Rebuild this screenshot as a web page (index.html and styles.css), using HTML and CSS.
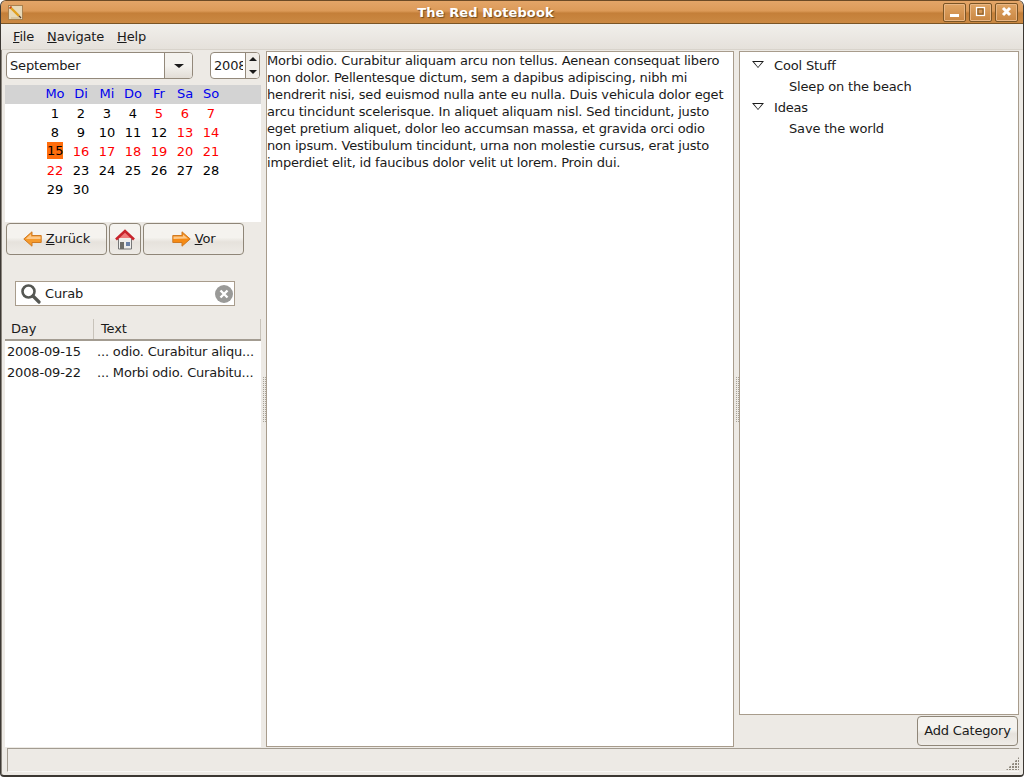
FILE: index.html
```html
<!DOCTYPE html>
<html lang="en">
<head>
<meta charset="utf-8">
<title>The Red Notebook</title>
<link rel="stylesheet" href="styles.css">
</head>
<body>
<div class="window">
  <header class="titlebar">
    <svg class="app-icon" width="15" height="15" viewBox="0 0 15 15"><rect x=".5" y=".5" width="14" height="14" fill="#e8d9b8" stroke="#a8814f"/><path d="M2 2l9 9" stroke="#e0a020" stroke-width="2.4"/><path d="M1.5 3.5l2-2" stroke="#c03a20" stroke-width="1.5"/><path d="M11 11l2 2" stroke="#5a4030" stroke-width="1.5"/><path d="M3 13h9" stroke="#c9b48c"/></svg>
    <div class="title">The Red Notebook</div>
    <div class="wm-buttons">
      <div class="wm-btn"><svg width="14" height="14" viewBox="0 0 14 14"><rect x="2" y="9" width="9" height="3" fill="#fff"/></svg></div>
      <div class="wm-btn"><svg width="14" height="14" viewBox="0 0 14 14"><rect x="2.500" y="2.500" width="8" height="8" fill="none" stroke="#fff" stroke-width="1.200"/><rect x="4" y="4" width="5" height="5" fill="none" stroke="#7a5526" stroke-width="1"/></svg></div>
      <div class="wm-btn"><svg width="14" height="14" viewBox="0 0 14 14"><path d="M3 3l7 7M10 3l-7 7" stroke="#fff" stroke-width="3"/></svg></div>
    </div>
  </header>

  <nav class="menubar">
    <span class="menu-item"><u>F</u>ile</span>
    <span class="menu-item"><u>N</u>avigate</span>
    <span class="menu-item"><u>H</u>elp</span>
  </nav>

  <main class="panes">
    <section class="left">
      <div class="date-controls">
        <div class="combo">
          <span class="combo-text">September</span>
          <span class="combo-arrow"><i class="tri-down"></i></span>
        </div>
        <div class="spin">
          <span class="spin-text">2008</span>
          <span class="spin-arrows"><i class="tri-up"></i><i class="tri-down small"></i></span>
        </div>
      </div>

      <div class="calendar">
        <div class="cal-head">
          <span>Mo</span><span>Di</span><span>Mi</span><span>Do</span><span>Fr</span><span>Sa</span><span>So</span>
        </div>
        <div class="cal-days">
          <span>1</span><span>2</span><span>3</span><span>4</span><span class="mark">5</span><span class="mark">6</span><span class="mark">7</span>
          <span>8</span><span>9</span><span>10</span><span>11</span><span>12</span><span class="mark">13</span><span class="mark">14</span>
          <span><b class="today">15</b></span><span class="mark">16</span><span class="mark">17</span><span class="mark">18</span><span class="mark">19</span><span class="mark">20</span><span class="mark">21</span>
          <span class="mark">22</span><span>23</span><span>24</span><span>25</span><span>26</span><span>27</span><span>28</span>
          <span>29</span><span>30</span>
        </div>
      </div>

      <div class="nav-buttons">
        <button class="btn btn-wide" type="button">
          <svg class="btn-arrow" width="19" height="16" viewBox="0 0 19 16"><path d="M.8 8L9 .8V4.500h9.200v7H9v3.700z" fill="#f59a2c" stroke="#d07a22"/><path d="M3 7.500l5-4.500V5.500h9.500V8H4z" fill="#fcc88a"/></svg>
          <span class="btn-label"><u>Z</u>urück</span>
        </button>
        <button class="btn btn-home" type="button">
          <svg width="20" height="21" viewBox="0 0 20 21"><path d="M3.500 10v10h13V10" fill="#eeeeec" stroke="#777"/><rect x="5" y="13" width="4" height="7" fill="#6e6e6a"/><rect x="11" y="13" width="4" height="4" fill="#6b82a8"/><path d="M10 3.500L4 9h12z" fill="#ef7a7a"/><path d="M1 10.500L10 2l9 8.500" fill="none" stroke="#c8242c" stroke-width="2.600"/></svg>
        </button>
        <button class="btn btn-wide" type="button">
          <svg class="btn-arrow" width="19" height="16" viewBox="0 0 19 16"><path d="M18.200 8L10 .8V4.500H.8v7H10v3.700z" fill="#f58a14" stroke="#d07a22"/><path d="M16 7.500l-5-4V5.500H1.500V8z" fill="#fcc88a"/></svg>
          <span class="btn-label"><u>V</u>or</span>
        </button>
      </div>

      <div class="search">
        <svg class="search-icon" width="21" height="21" viewBox="0 0 21 21"><circle cx="8.500" cy="8.500" r="6" fill="#fff" stroke="#555753" stroke-width="2.600"/><path d="M13 13l6 6" stroke="#555753" stroke-width="3.200" stroke-linecap="round"/></svg>
        <span class="search-text">Curab</span>
        <svg class="clear-icon" width="18" height="18" viewBox="0 0 18 18"><circle cx="9" cy="9" r="9" fill="#9a9a98"/><path d="M5.500 5.500l7 7M12.500 5.500l-7 7" stroke="#fff" stroke-width="2.400"/></svg>
      </div>

      <div class="results">
        <div class="results-head">
          <div class="col-day">Day</div>
          <div class="col-text">Text</div>
        </div>
        <div class="result-row"><span class="r-day">2008-09-15</span><span class="r-text">... odio. Curabitur aliqu...</span></div>
        <div class="result-row"><span class="r-day">2008-09-22</span><span class="r-text">... Morbi odio. Curabitu...</span></div>
      </div>
    </section>

    <div class="handle"><i class="grip"></i></div>

    <section class="editor">Morbi odio. Curabitur aliquam arcu non tellus. Aenean consequat libero non dolor. Pellentesque dictum, sem a dapibus adipiscing, nibh mi hendrerit nisi, sed euismod nulla ante eu nulla. Duis vehicula dolor eget arcu tincidunt scelerisque. In aliquet aliquam nisl. Sed tincidunt, justo eget pretium aliquet, dolor leo accumsan massa, et gravida orci odio non ipsum. Vestibulum tincidunt, urna non molestie cursus, erat justo imperdiet elit, id faucibus dolor velit ut lorem. Proin dui.</section>

    <div class="handle"><i class="grip"></i></div>

    <section class="right">
      <div class="tree">
        <div class="tree-row"><i class="expander"></i><span>Cool Stuff</span></div>
        <div class="tree-row child">Sleep on the beach</div>
        <div class="tree-row"><i class="expander"></i><span>Ideas</span></div>
        <div class="tree-row child">Save the world</div>
      </div>
      <div class="right-actions">
        <button class="btn btn-add" type="button">Add Category</button>
      </div>
    </section>
  </main>

  <footer class="statusbar"><i class="resize-grip"></i></footer>
</div>
</body>
</html>
```
FILE: styles.css
```css
* { box-sizing: border-box; }
html, body { margin: 0; height: 100%; }
body {
  width: 1024px;
  height: 777px;
  overflow: hidden;
  font: 13px/17px "DejaVu Sans", sans-serif;
  letter-spacing: -0.17px;
  color: #1a1a1a;
  background: #fff;
}
.window {
  width: 1024px;
  height: 777px;
  display: flex;
  flex-direction: column;
  background: #edeae5;
  border: 1px solid #3c3833;
  border-top-color: #6b4a26;
  border-bottom-width: 2px;
  border-radius: 6px 6px 4px 4px;
  overflow: hidden;
  box-shadow: inset 1px 0 0 #8a857d;
}
.titlebar {
  flex: none;
  height: 23px;
  display: flex;
  align-items: center;
  padding: 0 4px 0 7px;
  background: linear-gradient(#e3a568 0, #dc9a58 45%, #c47f39 55%, #cb8943 100%);
  border-bottom: 1px solid #7a5526;
}
.app-icon { flex: none; }
.title {
  flex: 1;
  padding-left: 11px;
  text-align: center;
  font-weight: 700;
  font-size: 13px;
  letter-spacing: 0.1px;
  color: #fff;
  text-shadow: 1px 1px 1px #6e4a1e;
}
.wm-buttons { display: flex; gap: 3px; margin-left: 6px; margin-right: 1px; }
.wm-btn {
  width: 23px;
  height: 19px;
  display: flex;
  align-items: center;
  justify-content: center;
  border: 1px solid #7a5526;
  border-radius: 2px;
  background: linear-gradient(#e0a565, #c98642);
  box-shadow: inset 0 0 0 1px #e9b684;
}
.menubar {
  flex: none;
  height: 26px;
  display: flex;
  align-items: center;
  gap: 13px;
  padding: 0 0 0 12px;
  background: linear-gradient(#f1efeb, #e5e1db);
  border-bottom: 1px solid #d8d3cb;
}
.menu-item { white-space: nowrap; }
.panes {
  flex: 1;
  min-height: 0;
  display: flex;
  padding: 1px 4px 0 4px;
}
.left {
  flex: none;
  width: 256px;
  display: flex;
  flex-direction: column;
}
.date-controls {
  flex: none;
  display: flex;
  justify-content: space-between;
  padding: 1px 1px 0 1px;
  height: 34px;
}
.combo, .spin {
  height: 27px;
  display: flex;
  border: 1px solid #93897b;
  border-radius: 4px;
  overflow: hidden;
  background: #fff;
}
.combo { width: 187px; }
.combo-text { flex: 1; padding: 4px 0 0 3px; }
.combo-arrow {
  width: 28px;
  display: flex;
  align-items: center;
  justify-content: center;
  border-left: 1px solid #93897b;
  background: linear-gradient(#f4f2ee 50%, #e2ddd6);
}
.spin { width: 50px; }
.spin-text { width: 32px; margin-right: 2px; padding: 4px 0 0 3px; overflow: hidden; white-space: nowrap; }
.spin-arrows {
  flex: 1;
  display: flex;
  flex-direction: column;
  align-items: center;
  justify-content: center;
  gap: 9px;
  border-left: 1px solid #93897b;
  background: #f1eee9;
}
.tri-down, .tri-up { display: block; width: 0; height: 0; border-left: 5px solid transparent; border-right: 5px solid transparent; }
.tri-down { border-top: 4px solid #1a1a1a; }
.tri-up { border-left-width: 4px; border-right-width: 4px; border-bottom: 4px solid #1a1a1a; }
.tri-down.small { border-left-width: 4px; border-right-width: 4px; }
.calendar { flex: none; height: 137px; background: #fff; letter-spacing: 0; }
.cal-head, .cal-days {
  display: grid;
  grid-template-columns: repeat(7, 26px);
  padding-left: 37px;
  text-align: center;
}
.cal-head { height: 19px; background: #d3d3d3; color: #0000ee; line-height: 18px; }
.cal-days { grid-auto-rows: 19px; line-height: 19px; color: #000; }
.mark { color: #f00; }
.today {
  display: block;
  width: 16px;
  height: 17px;
  margin: 0 auto;
  font-weight: 400;
  line-height: 17px;
  background: #ff6d0c;
  color: #000;
}
.nav-buttons {
  flex: none;
  display: flex;
  gap: 2px;
  padding: 1px 0 0 1px;
  height: 59px;
}
.btn {
  font: inherit;
  letter-spacing: inherit;
  color: inherit;
  padding: 0;
  border: 1px solid #8f8678;
  border-radius: 4px;
  background: linear-gradient(#f5f3ef 45%, #e6e2dc 60%, #eeebe6);
  display: flex;
  align-items: center;
  justify-content: center;
}
.btn-wide { width: 101px; height: 32px; gap: 4px; padding-bottom: 2px; }
.btn-arrow { margin-top: 1px; }
.btn-home { width: 32px; height: 32px; }
.btn-label { white-space: nowrap; }
.search {
  flex: none;
  width: 220px;
  height: 25px;
  margin-left: 10px;
  display: flex;
  align-items: center;
  padding: 0 0 0 4px;
  background: #fff;
  border: 1px solid #a89c8c;
}
.search-icon { flex: none; }
.search-text { flex: 1; padding-left: 4px; }
.clear-icon { flex: none; margin-right: 1px; }
.results {
  flex: 1;
  min-height: 0;
  margin-top: 13px;
  background: #fff;
}
.results-head {
  display: flex;
  height: 22px;
  background: #edeae5;
  border-bottom: 2px solid #a39c91;
  line-height: 19px;
}
.col-day { width: 89px; padding-left: 6px; border-right: 1px solid #c8c3ba; }
.col-text { flex: 1; padding-left: 7px; border-right: 1px solid #c8c3ba; }
.result-row { display: flex; height: 21px; padding: 2px 0 0 2px; white-space: nowrap; line-height: 17px; }
.r-day { width: 90px; }
.handle {
  flex: none;
  width: 5px;
  display: flex;
  align-items: center;
  justify-content: center;
}
.grip {
  display: block;
  width: 4px;
  height: 45px;
  background: conic-gradient(#a8a297 25%, transparent 0) 0 0 / 2px 2px;
}
.editor {
  flex: none;
  width: 468px;
  padding: 0 8px 0 0;
  background: #fff;
  border: 1px solid #a89c8c;
}
.right {
  flex: 1;
  min-width: 0;
  display: flex;
  flex-direction: column;
}
.tree {
  flex: 1;
  min-height: 0;
  background: #fff;
  border: 1px solid #a89c8c;
  padding-top: 3px;
}
.tree-row { height: 21px; display: flex; align-items: center; padding-left: 12px; }
.tree-row.child { padding-left: 49px; }
.expander {
  flex: none;
  width: 0;
  height: 0;
  margin-right: 10px;
  margin-top: -2px;
  border-left: 6px solid transparent;
  border-right: 6px solid transparent;
  border-top: 7px solid #1a1a1a;
  position: relative;
}
.expander::after {
  content: "";
  position: absolute;
  left: -4px;
  top: -6px;
  border-left: 4px solid transparent;
  border-right: 4px solid transparent;
  border-top: 5px solid #fff;
}
.right-actions {
  flex: none;
  height: 32px;
  display: flex;
  justify-content: flex-end;
  padding: 1px 1px 0 0;
}
.btn-add { width: 101px; height: 30px; padding-bottom: 2px; }
.statusbar {
  flex: none;
  height: 24px;
  margin: 1px 4px 3px 6px;
  border-top: 1px solid #a39c91;
  border-left: 1px solid #a39c91;
  border-bottom: 1px solid #f8f7f5;
  display: flex;
  justify-content: flex-end;
  align-items: flex-end;
}
.resize-grip {
  display: block;
  width: 13px;
  height: 13px;
  margin: 0 0 1px 0;
  background: radial-gradient(circle at 1px 1px, #8f897e 1px, transparent 1px) 0 0 / 3px 3px;
  clip-path: polygon(100% 0, 100% 100%, 0 100%);
}
```
